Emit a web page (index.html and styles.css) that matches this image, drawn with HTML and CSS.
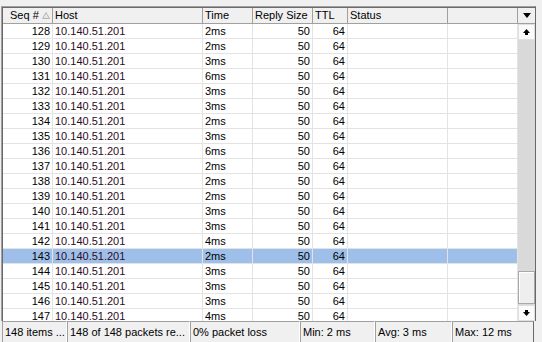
FILE: index.html
```html
<!DOCTYPE html>
<html lang="en">

<head>
    <meta charset="UTF-8">
    <title>Ping</title>
    <link rel="stylesheet" href="styles.css">
</head>

<body>
    <div class="window">
        <div class="list">
            <div class="grid">
                <div class="row head">
                    <span class="seq-head">Seq # <svg class="sort" width="8" height="7" viewBox="0 0 8 7"><path d="M4 0.5 L7.5 6.5 L0.5 6.5 Z" fill="#e6e6e6" stroke="#b4b4b4" stroke-width="1"/></svg></span>
                    <span>Host</span>
                    <span>Time</span>
                    <span>Reply Size</span>
                    <span>TTL</span>
                    <span>Status</span>
                    <span></span>
                </div>
                <div class="row"><span class="num">128</span><span class="host">10.140.51.201</span><span>2ms</span><span class="num">50</span><span class="num">64</span><span></span><span></span></div>
                <div class="row"><span class="num">129</span><span class="host">10.140.51.201</span><span>2ms</span><span class="num">50</span><span class="num">64</span><span></span><span></span></div>
                <div class="row"><span class="num">130</span><span class="host">10.140.51.201</span><span>3ms</span><span class="num">50</span><span class="num">64</span><span></span><span></span></div>
                <div class="row"><span class="num">131</span><span class="host">10.140.51.201</span><span>6ms</span><span class="num">50</span><span class="num">64</span><span></span><span></span></div>
                <div class="row"><span class="num">132</span><span class="host">10.140.51.201</span><span>3ms</span><span class="num">50</span><span class="num">64</span><span></span><span></span></div>
                <div class="row"><span class="num">133</span><span class="host">10.140.51.201</span><span>3ms</span><span class="num">50</span><span class="num">64</span><span></span><span></span></div>
                <div class="row"><span class="num">134</span><span class="host">10.140.51.201</span><span>2ms</span><span class="num">50</span><span class="num">64</span><span></span><span></span></div>
                <div class="row"><span class="num">135</span><span class="host">10.140.51.201</span><span>3ms</span><span class="num">50</span><span class="num">64</span><span></span><span></span></div>
                <div class="row"><span class="num">136</span><span class="host">10.140.51.201</span><span>6ms</span><span class="num">50</span><span class="num">64</span><span></span><span></span></div>
                <div class="row"><span class="num">137</span><span class="host">10.140.51.201</span><span>2ms</span><span class="num">50</span><span class="num">64</span><span></span><span></span></div>
                <div class="row"><span class="num">138</span><span class="host">10.140.51.201</span><span>2ms</span><span class="num">50</span><span class="num">64</span><span></span><span></span></div>
                <div class="row"><span class="num">139</span><span class="host">10.140.51.201</span><span>2ms</span><span class="num">50</span><span class="num">64</span><span></span><span></span></div>
                <div class="row"><span class="num">140</span><span class="host">10.140.51.201</span><span>3ms</span><span class="num">50</span><span class="num">64</span><span></span><span></span></div>
                <div class="row"><span class="num">141</span><span class="host">10.140.51.201</span><span>3ms</span><span class="num">50</span><span class="num">64</span><span></span><span></span></div>
                <div class="row"><span class="num">142</span><span class="host">10.140.51.201</span><span>4ms</span><span class="num">50</span><span class="num">64</span><span></span><span></span></div>
                <div class="row selected"><span class="num">143</span><span class="host">10.140.51.201</span><span>2ms</span><span class="num">50</span><span class="num">64</span><span></span><span></span></div>
                <div class="row"><span class="num">144</span><span class="host">10.140.51.201</span><span>3ms</span><span class="num">50</span><span class="num">64</span><span></span><span></span></div>
                <div class="row"><span class="num">145</span><span class="host">10.140.51.201</span><span>3ms</span><span class="num">50</span><span class="num">64</span><span></span><span></span></div>
                <div class="row"><span class="num">146</span><span class="host">10.140.51.201</span><span>3ms</span><span class="num">50</span><span class="num">64</span><span></span><span></span></div>
                <div class="row"><span class="num">147</span><span class="host">10.140.51.201</span><span>4ms</span><span class="num">50</span><span class="num">64</span><span></span><span></span></div>
            </div>
            <div class="scrollbar">
                <div class="col-menu">
                    <svg width="8" height="5" viewBox="0 0 8 5"><path d="M0 0 H8 L4 5 Z" fill="#000"/></svg>
                </div>
                <div class="scroll-btn">
                    <svg width="7" height="6" viewBox="0 0 7 6"><path d="M3.5 0 L7 4 H5 V6 H2 V4 H0 Z" fill="#000"/></svg>
                </div>
                <div class="track">
                    <div class="thumb"></div>
                </div>
                <div class="scroll-btn">
                    <svg width="7" height="6" viewBox="0 0 7 6"><path d="M2 0 H5 V2 H7 L3.5 6 L0 2 H2 Z" fill="#000"/></svg>
                </div>
            </div>
        </div>
        <div class="statusbar">
            <span class="seg seg-items">148 items ...</span>
            <span class="seg seg-packets">148 of 148 packets re...</span>
            <span class="seg seg-loss">0% packet loss</span>
            <span class="seg seg-min">Min: 2 ms</span>
            <span class="seg seg-avg">Avg: 3 ms</span>
            <span class="seg seg-max">Max: 12 ms</span>
        </div>
    </div>
</body>

</html>
```

FILE: styles.css
```css
* {
    box-sizing: border-box;
}

body {
    margin: 0;
    background-color: #f0f0f0;
    font-family: "Liberation Sans", Arial, sans-serif;
    font-size: 11px;
    color: #000;
    overflow: hidden;
}

.window {
    width: 542px;
    height: 342px;
    display: flex;
    flex-direction: column;
}

.list {
    margin: 6px 0 0 1px;
    width: 535px;
    height: 315px;
    display: flex;
    padding: 1px 0 0 1px;
    border: 1px solid #a0a0a0;
    border-right-color: #696969;
    border-bottom: none;
    box-shadow: inset 1px 1px 0 #696969;
    background-color: #fff;
    overflow: hidden;
}

.grid {
    width: 515px;
    flex-shrink: 0;
    background-color: #fff;
}

.row {
    display: grid;
    grid-template-columns: 50px 150px 50px 60px 35px 100px 70px;
    height: 15px;
}

.row span {
    border-right: 1px solid #e3e3e3;
    border-bottom: 1px solid #e3e3e3;
    padding: 0 2px;
    line-height: 14px;
    white-space: nowrap;
    overflow: hidden;
}

.row .num {
    text-align: right;
}

.row .host {
    color: #2e0a24;
}

.row.selected span {
    background-color: #9ebfe9;
}

.row.head {
    height: 16px;
    background-color: #f0f0f0;
}

.row.head span {
    border-right-color: #a0a0a0;
    border-bottom-color: #a0a0a0;
    line-height: 15px;
}

.row.head .seq-head {
    padding-left: 7px;
    display: flex;
    align-items: center;
}

.sort {
    margin-left: 3px;
}

.scrollbar {
    width: 17px;
    display: flex;
    flex-direction: column;
    background-color: #d9d9d9;
}

.col-menu {
    height: 16px;
    background-color: #f0f0f0;
    border-bottom: 1px solid #a0a0a0;
    display: flex;
    align-items: center;
    justify-content: center;
}

.scroll-btn {
    height: 16px;
    background-color: #fbfbfb;
    border: 1px solid #e0e0e0;
    display: flex;
    align-items: center;
    justify-content: center;
}

.track {
    flex: 1;
    display: flex;
    flex-direction: column;
    justify-content: flex-end;
    padding: 0 0 1px;
}

.thumb {
    height: 33px;
    background-color: #eeeeee;
    border: 1px solid #a8a8a8;
    box-shadow: inset 1px 1px 0 #fff;
}

.statusbar {
    display: flex;
    padding-left: 2px;
    height: 21px;
}

.seg {
    border-top: 1px solid #a0a0a0;
    border-left: 1px solid #a0a0a0;
    border-right: 1px solid #fff;
    padding: 3px 0 0 2px;
    line-height: 14px;
    white-space: nowrap;
    overflow: hidden;
}

.seg-items {
    width: 65px;
}

.seg-packets {
    width: 123px;
}

.seg-loss {
    width: 110px;
}

.seg-min {
    width: 75px;
}

.seg-avg {
    width: 77px;
}

.seg-max {
    width: 82px;
    border-right-color: #696969;
}
```
